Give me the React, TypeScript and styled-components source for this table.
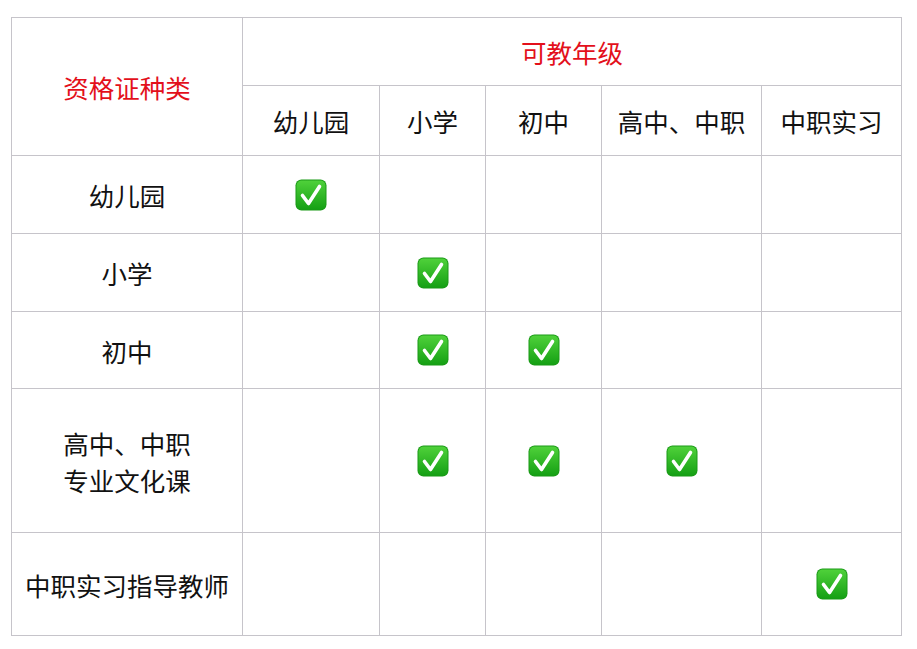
import React from 'react';
import styled, { createGlobalStyle } from 'styled-components';

const GlobalStyle = createGlobalStyle`
  html, body {
    margin: 0;
    padding: 0;
    background: #fff;
  }
  body {
    font-family: "Noto Sans CJK SC", "Noto Sans", sans-serif;
  }
`;

const Page = styled.div`
  padding: 17px 0 0 11px;
`;

const Table = styled.table`
  border-collapse: collapse;
  table-layout: fixed;
  width: 891px;
`;

const Col = styled.col<{ $w: number }>`
  width: ${props => props.$w}px;
`;

const Cell = styled.td<{ $red?: boolean }>`
  border: 1px solid #c6c4ca;
  padding: 0;
  text-align: center;
  vertical-align: middle;
  font-size: 25.5px;
  line-height: 37px;
  color: ${props => (props.$red ? '#e3101b' : '#111')};
`;

const Row = styled.tr<{ $h: number }>`
  height: ${props => props.$h}px;
`;

const CheckBox = styled.svg`
  display: block;
  margin: 0 auto;
  width: 32px;
  height: 32px;
`;

const Check = () => (
  <CheckBox viewBox="0 0 32 32">
    <defs>
      <linearGradient id="g" x1="0" y1="0" x2="0" y2="1">
        <stop offset="0" stopColor="#4fd13a" />
        <stop offset="1" stopColor="#15a014" />
      </linearGradient>
    </defs>
    <rect x="0.5" y="0.5" width="31" height="31" rx="6" fill="#1a9a17" />
    <rect x="1.5" y="1.5" width="29" height="29" rx="5" fill="url(#g)" />
    <path d="M7.5 16.5 L13.5 24.5 L24.5 7.5" fill="none" stroke="#fff" strokeWidth="3.6" strokeLinecap="round" strokeLinejoin="round" />
  </CheckBox>
);

const colWidths = [231, 137, 106, 116, 160, 140];

const grades = ['幼儿园', '小学', '初中', '高中、中职', '中职实习'];

const rows: { label: React.ReactNode; checks: number[]; h: number }[] = [
  { label: '幼儿园', checks: [0], h: 78 },
  { label: '小学', checks: [1], h: 78 },
  { label: '初中', checks: [1, 2], h: 77 },
  { label: <>高中、中职<br />专业文化课</>, checks: [1, 2, 3], h: 144 },
  { label: '中职实习指导教师', checks: [4], h: 103 },
];

const App = () => (
  <Page>
    <GlobalStyle />
    <Table>
      <colgroup>
        {colWidths.map((w, i) => (
          <Col key={i} $w={w} />
        ))}
      </colgroup>
      <tbody>
        <Row $h={68}>
          <Cell rowSpan={2} $red>资格证种类</Cell>
          <Cell colSpan={5} $red>可教年级</Cell>
        </Row>
        <Row $h={70}>
          {grades.map(g => (
            <Cell key={g}>{g}</Cell>
          ))}
        </Row>
        {rows.map((r, i) => (
          <Row key={i} $h={r.h}>
            <Cell>{r.label}</Cell>
            {grades.map((_, j) => (
              <Cell key={j}>{r.checks.includes(j) ? <Check /> : null}</Cell>
            ))}
          </Row>
        ))}
      </tbody>
    </Table>
  </Page>
);

export default App;
